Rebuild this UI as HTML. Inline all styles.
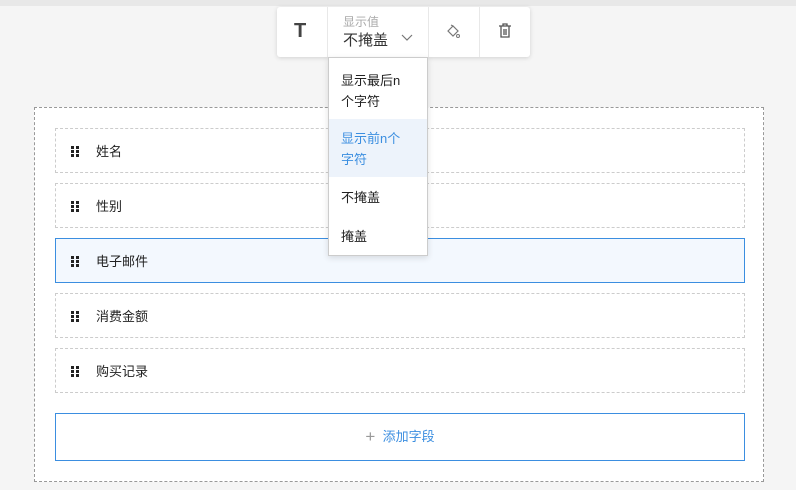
<!DOCTYPE html>
<html><head><meta charset="utf-8"><style>
*{box-sizing:border-box;margin:0;padding:0}
body{width:796px;height:490px;background:#f5f5f5;font-family:"Liberation Sans","Noto Sans CJK SC",sans-serif;position:relative;overflow:hidden;font-size:13px;color:#222}
.top{position:absolute;left:0;top:0;width:796px;height:6px;background:#e8e8e8}
.box{position:absolute;left:34px;top:107px;width:730px;height:375px;background:#fff;border:1px dashed #999}
.row{position:absolute;left:55px;width:690px;height:45px;border:1px dashed #ccc;background:#fff}
.row.sel{border:1px solid #3b8ee0;background:#f3f8fe}
.row .h{position:absolute;left:15px;top:17px;width:8px;height:12px}
.row .h i{position:absolute;width:3px;height:3px;background:#222}
.row span{position:absolute;left:40px;top:12px;font-size:13px}
.add{position:absolute;left:55px;top:413px;width:690px;height:48px;border:1px solid #3b8ee0;background:#fff;color:#3b8ee0;text-align:center;line-height:46px;font-size:13px}
.tb{position:absolute;left:277px;top:7px;width:253px;height:50px;background:#fff;border-radius:3px;box-shadow:0 1px 5px rgba(0,0,0,.15)}
.sep{position:absolute;top:0;width:1px;height:50px;background:#e8e8e8}
.dd{position:absolute;left:328px;top:57px;width:100px;height:199px;background:#fff;border:1px solid #ccc;box-shadow:0 2px 6px rgba(0,0,0,.12)}
.it{position:absolute;left:0;width:98px;padding-left:12px;font-size:13px;line-height:21px}
</style></head><body>
<div class="top"></div>
<div class="box"></div>
<div class="row" style="top:128px"><div class="h"><i style="left:0;top:0"></i><i style="left:5px;top:0"></i><i style="left:0;top:4px"></i><i style="left:5px;top:4px"></i><i style="left:0;top:8px"></i><i style="left:5px;top:8px"></i></div><span>姓名</span></div>
<div class="row" style="top:183px"><div class="h"><i style="left:0;top:0"></i><i style="left:5px;top:0"></i><i style="left:0;top:4px"></i><i style="left:5px;top:4px"></i><i style="left:0;top:8px"></i><i style="left:5px;top:8px"></i></div><span>性别</span></div>
<div class="row sel" style="top:238px"><div class="h"><i style="left:0;top:0"></i><i style="left:5px;top:0"></i><i style="left:0;top:4px"></i><i style="left:5px;top:4px"></i><i style="left:0;top:8px"></i><i style="left:5px;top:8px"></i></div><span>电子邮件</span></div>
<div class="row" style="top:293px"><div class="h"><i style="left:0;top:0"></i><i style="left:5px;top:0"></i><i style="left:0;top:4px"></i><i style="left:5px;top:4px"></i><i style="left:0;top:8px"></i><i style="left:5px;top:8px"></i></div><span>消费金额</span></div>
<div class="row" style="top:348px"><div class="h"><i style="left:0;top:0"></i><i style="left:5px;top:0"></i><i style="left:0;top:4px"></i><i style="left:5px;top:4px"></i><i style="left:0;top:8px"></i><i style="left:5px;top:8px"></i></div><span>购买记录</span></div>
<div class="add"><span style="font-size:17px;color:#999;vertical-align:-1px">+</span>&nbsp; 添加字段</div>
<div class="tb">
 <div style="position:absolute;left:17px;top:13px;font-size:20px;font-weight:bold;color:#444">T</div>
 <div class="sep" style="left:50px"></div>
 <div style="position:absolute;left:66px;top:6px;font-size:12px;color:#aaa">显示值</div>
 <div style="position:absolute;left:66px;top:22px;font-size:15px;color:#333">不掩盖</div>
 <svg style="position:absolute;left:124px;top:27px" width="12" height="8"><path d="M1 1l5 5 5-5" fill="none" stroke="#777" stroke-width="1.2"/></svg>
 <div class="sep" style="left:151px"></div>
 <svg style="position:absolute;left:168px;top:17px" width="16" height="16"><path d="M3 7l5-5 5 5-5 5z M8 2l-2-1" fill="none" stroke="#777" stroke-width="1.2"/><circle cx="13" cy="12" r="1.5" fill="none" stroke="#777"/></svg>
 <div class="sep" style="left:202px"></div>
 <svg style="position:absolute;left:221px;top:16px" width="14" height="16"><path d="M1 3h12M5 3V1h4v2M3 3v11h8V3M6 6v6M8 6v6" fill="none" stroke="#555" stroke-width="1.3"/></svg>
</div>
<div class="dd">
 <div class="it" style="top:12px">显示最后n<br>个字符</div>
 <div class="it" style="top:61px;height:58px;background:#edf3fb;color:#3b8ee0;padding-top:9px">显示前n个<br>字符</div>
 <div class="it" style="top:129px">不掩盖</div>
 <div class="it" style="top:168px">掩盖</div>
</div>
</body></html>
